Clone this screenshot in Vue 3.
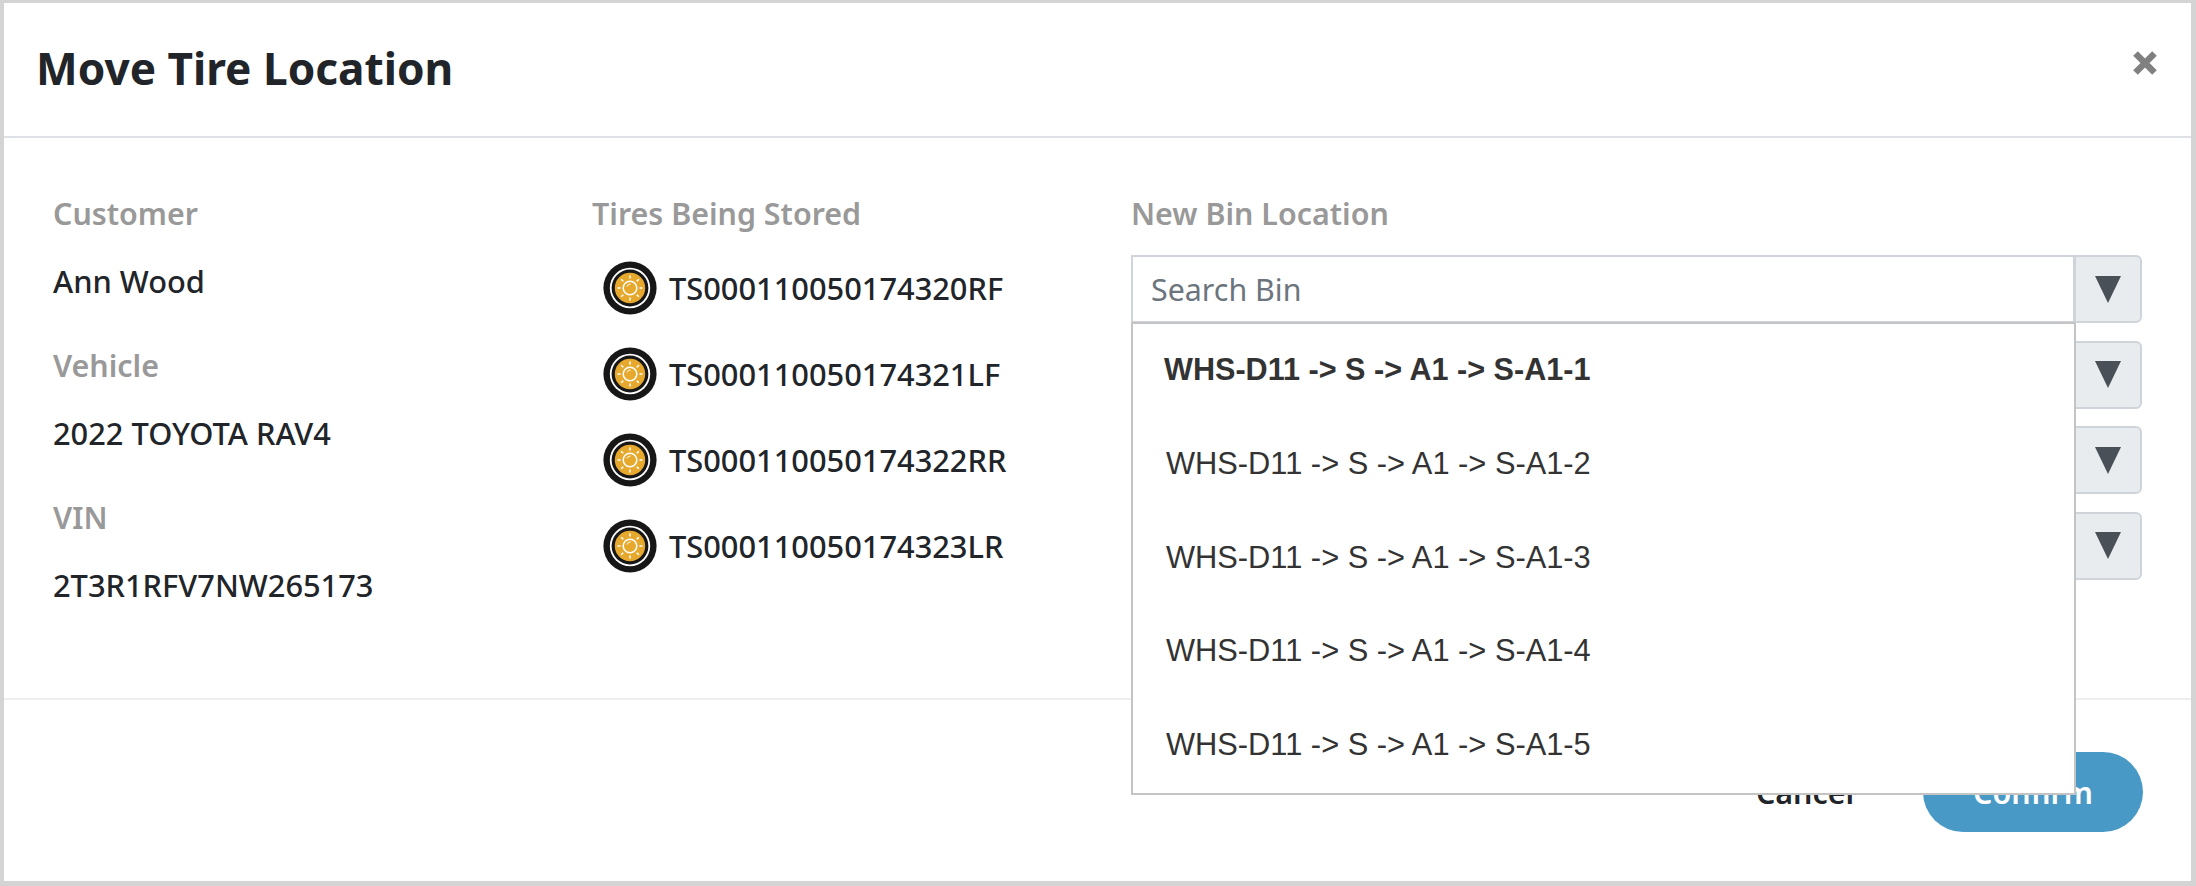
<script setup>
const customerInfo = [
  { label: 'Customer', value: 'Ann Wood' },
  { label: 'Vehicle', value: '2022 TOYOTA RAV4' },
  { label: 'VIN', value: '2T3R1RFV7NW265173' },
]
const tires = ['TS000110050174320RF', 'TS000110050174321LF', 'TS000110050174322RR', 'TS000110050174323LR']
const bins = ['S-A1-1', 'S-A1-2', 'S-A1-3', 'S-A1-4', 'S-A1-5'].map((b) => `WHS-D11 -> S -> A1 -> ${b}`)
const rays = [0, 45, 90, 135, 180, 225, 270, 315]
</script>

<template>
  <div class="modal">
    <header class="head">
      <h1>Move Tire Location</h1>
      <svg class="close" viewBox="0 0 26 26" aria-label="Close">
        <path d="M3.5 3.5 L22.5 22.5 M22.5 3.5 L3.5 22.5" />
      </svg>
    </header>
    <main class="body">
      <section class="col">
        <div v-for="item in customerInfo" :key="item.label" class="info">
          <div class="label">{{ item.label }}</div>
          <div class="value">{{ item.value }}</div>
        </div>
      </section>
      <section class="col">
        <div class="label">Tires Being Stored</div>
        <div v-for="tire in tires" :key="tire" class="tire">
          <svg class="tire-icon" viewBox="0 0 54 54">
            <circle cx="27" cy="27" r="26.6" fill="#171717" />
            <circle cx="27" cy="27" r="20.2" fill="#fff" />
            <circle cx="27" cy="27" r="18.4" fill="#171717" />
            <circle cx="27" cy="27" r="15.2" fill="#e6a92e" />
            <g stroke="#fff" stroke-width="1.5">
              <line v-for="r in rays" :key="r" x1="27" y1="14.5" x2="27" y2="17.5" :transform="`rotate(${r} 27 27)`" />
            </g>
            <circle cx="27" cy="27" r="6.8" fill="none" stroke="#fff" stroke-width="1.5" />
            <path d="M24 25.5 A3.6 3.6 0 0 1 27.5 23" fill="none" stroke="#fff" stroke-width="1" />
          </svg>
          <span class="value">{{ tire }}</span>
        </div>
      </section>
      <section class="col bins">
        <div class="label">New Bin Location</div>
        <div class="rows">
          <div v-for="(tire, i) in tires" :key="tire" class="group">
            <input v-if="i === 0" class="input" placeholder="Search Bin" />
            <div v-else class="input"></div>
            <div class="caret"><span></span></div>
          </div>
          <ul class="menu">
            <li v-for="(bin, i) in bins" :key="bin" :class="{ active: i === 0 }">{{ bin }}</li>
          </ul>
        </div>
      </section>
    </main>
    <footer class="foot">
      <button class="cancel">Cancel</button>
      <button class="confirm">Confirm</button>
    </footer>
  </div>
</template>

<style>
html, body { margin: 0; background: #fff; }
</style>

<style scoped>
.modal {
  box-sizing: border-box;
  width: 2196px;
  height: 886px;
  border-style: solid;
  border-color: #d4d4d4;
  border-width: 3px 5px 5px 4px;
  background: #fff;
  display: flex;
  flex-direction: column;
  font-family: "Noto Sans", sans-serif;
  color: #212529;
}
.head {
  height: 133px;
  flex: none;
  border-bottom: 2px solid #dee2e6;
  display: flex;
  align-items: center;
  justify-content: space-between;
  padding: 0 33px 0 32px;
}
h1 {
  margin: 0;
  font-size: 44.2px;
  font-weight: 700;
  line-height: 1;
  position: relative;
  top: -1px;
}
.close {
  width: 26px;
  height: 26px;
  margin-bottom: 13px;
}
.close path {
  fill: none;
  stroke: #808080;
  stroke-width: 6.5;
}
.body {
  height: 562px;
  flex: none;
  box-sizing: border-box;
  border-bottom: 2px solid #eeeeee;
  display: grid;
  grid-template-columns: 539px 539px 1012px;
  padding: 57px 0 0 49px;
}
.label {
  font-size: 30.4px;
  line-height: 38px;
  font-weight: 600;
  color: #999999;
}
.value {
  font-size: 30.8px;
  line-height: 38px;
  font-weight: 500;
  color: #212529;
}
.info {
  display: flex;
  flex-direction: column;
  gap: 29px;
  margin-bottom: 47px;
}
.tire {
  display: flex;
  align-items: center;
  gap: 12px;
  height: 54px;
  margin-left: 11px;
  margin-top: 32px;
}
.tire:nth-of-type(2) { margin-top: 28px; }
.tire-icon {
  width: 54px;
  height: 54px;
  flex: none;
}
.rows {
  position: relative;
  margin-top: 22px;
  width: 1012px;
  display: flex;
  flex-direction: column;
  gap: 17.6px;
}
.group {
  display: flex;
  height: 68px;
}
.input {
  box-sizing: border-box;
  width: 944px;
  height: 68px;
  border: 2px solid #ced4da;
  background: #fff;
  padding: 0 18px;
  font: 400 30.4px "Noto Sans", sans-serif;
  outline: none;
}
.input::placeholder { color: #6c757d; opacity: 1; }
.caret {
  box-sizing: border-box;
  width: 68px;
  height: 68px;
  margin-left: -1px;
  background: #e9ecef;
  border: 2px solid #ced4da;
  border-radius: 0 6px 6px 0;
  display: flex;
  align-items: center;
  justify-content: center;
}
.caret span {
  width: 0;
  height: 0;
  border-left: 13px solid transparent;
  border-right: 13px solid transparent;
  border-top: 27px solid #495057;
}
.menu {
  position: absolute;
  top: 67px;
  left: 0;
  box-sizing: border-box;
  width: 945px;
  height: 473px;
  margin: 0;
  padding: 0;
  list-style: none;
  background: #fff;
  border: 2px solid #c4c4c4;
  font-family: "Liberation Sans", Arial, sans-serif;
  font-size: 30.8px;
  color: #333333;
}
.menu li {
  height: 93.8px;
  line-height: 91px;
  padding-left: 33px;
}
.menu li.active {
  font-weight: 700;
  padding-left: 31px;
  font-size: 30.6px;
}
.foot {
  flex: 1;
  display: flex;
  align-items: flex-start;
  justify-content: flex-end;
  padding: 52px 48px 0 0;
}
button {
  font-family: "Noto Sans", sans-serif;
  font-size: 30.4px;
  font-weight: 600;
  border: 0;
  cursor: pointer;
}
.cancel {
  background: transparent;
  color: #212529;
  width: 180px;
  height: 80px;
  padding: 0;
  margin-right: 28px;
}
.confirm {
  width: 220px;
  height: 80px;
  border-radius: 40px;
  background: #4899c6;
  color: #fff;
}
</style>
